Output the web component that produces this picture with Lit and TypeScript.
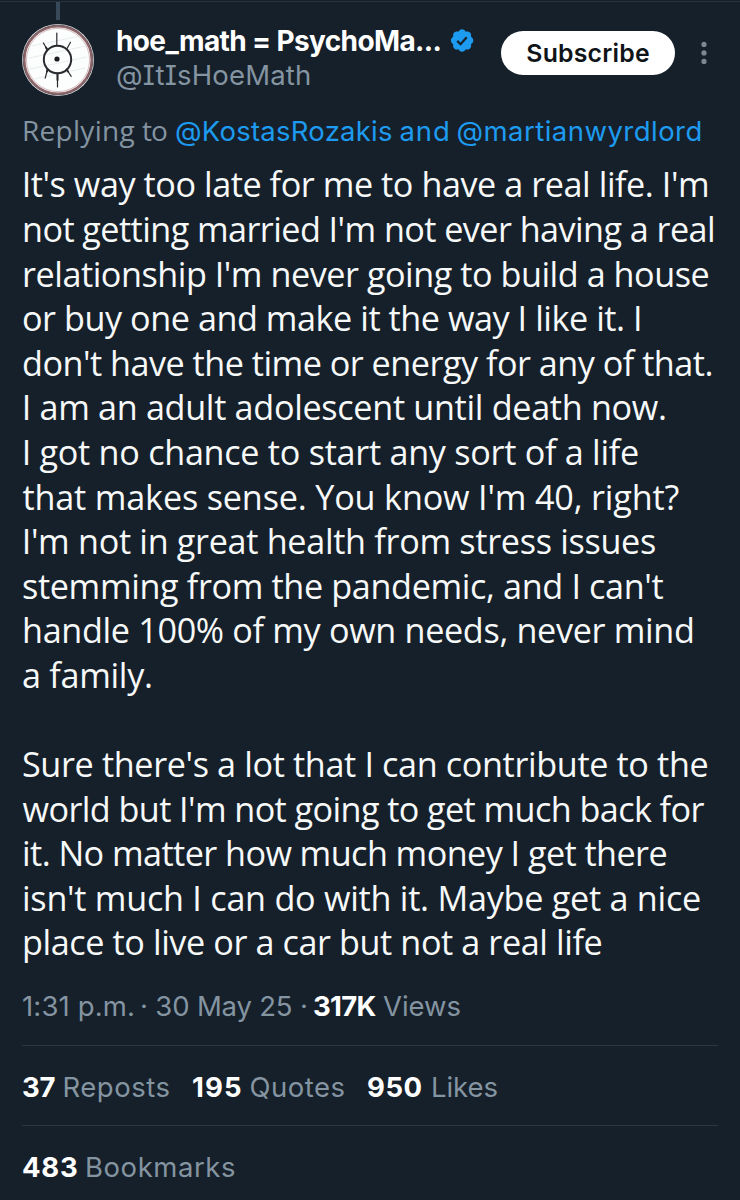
import { LitElement, html, css, svg } from "lit";
import { customElement, property } from "lit/decorators.js";

const pen = document.createElement("canvas").getContext("2d")!;

/** A run of text tracked so that its glyphs span exactly `span` pixels. */
@customElement("fit-text")
class FitText extends LitElement {
  @property() text = "";
  @property({ type: Number }) span = 0;
  @property({ type: Number }) lead = 0;

  static styles = css`
    :host { display: block; white-space: pre; flex: none; }
    .run { display: block; width: max-content; }
  `;

  render() {
    return html`<span class="run">${this.text}</span>`;
  }

  updated() {
    const run = this.renderRoot.querySelector(".run") as HTMLElement;
    run.style.letterSpacing = "0";
    run.style.textIndent = "0";
    const cs = getComputedStyle(run);
    pen.font = `${cs.fontWeight} ${cs.fontSize} ${cs.fontFamily}`;
    const m = pen.measureText(this.text);
    const bearings = m.width - m.actualBoundingBoxLeft - m.actualBoundingBoxRight;
    const ink = run.getBoundingClientRect().width - bearings;
    run.style.letterSpacing = `${(this.span - ink) / (this.text.length - 1)}px`;
    run.style.textIndent = `${m.actualBoundingBoxLeft}px`;
    this.style.width = `${this.span}px`;
    this.style.marginLeft = `${this.lead}px`;
  }
}

type Run = [text: string, from: number, to: number, kind?: string];

const EDGE = 23;

const runs = (list: Run[], edge = EDGE) => {
  let x = edge;
  return list.map(([text, from, to, kind]) => {
    const lead = from - x;
    x = to;
    return html`<fit-text class=${kind ?? "plain"} .text=${text} .span=${to - from} .lead=${lead}></fit-text>`;
  });
};

const BODY: (Run | null)[] = [
  ["It's way too late for me to have a real life. I'm", 24.7, 707],
  ["not getting married I'm not ever having a real", 24, 713],
  ["relationship I'm never going to build a house", 24, 708.5],
  ["or buy one and make it the way I like it. I", 23, 640],
  ["don't have the time or energy for any of that.", 23, 711.5],
  ["I am an adult adolescent until death now.", 24.7, 665],
  ["I got no chance to start any sort of a life", 24.7, 638],
  ["that makes sense. You know I'm 40, right?", 22.5, 678.5],
  ["I'm not in great health from stress issues", 24.7, 655],
  ["stemming from the pandemic, and I can't", 23, 663.5],
  ["handle 100% of my own needs, never mind", 24, 692],
  ["a family.", 23, 151],
  null,
  ["Sure there's a lot that I can contribute to the", 23, 707.5],
  ["world but I'm not going to get much back for", 22.5, 704.5],
  ["it. No matter how much money I get there", 24, 666.5],
  ["isn't much I can do with it. Maybe get a nice", 24, 700],
  ["place to live or a car but not a real life", 24, 601.5],
];

const avatar = svg`
  <circle cx="36" cy="36" r="36" fill="#e9e4e4"/>
  <circle cx="36" cy="36" r="33.6" fill="#fff" stroke="#8f6468" stroke-width="2.2"/>
  <circle cx="36" cy="36" r="34.9" fill="none" stroke="#51454c" stroke-width=".8"/>
  <circle cx="36" cy="36" r="31.6" fill="#fcfdfd" stroke="#c7adb0" stroke-width=".8"/>
  <g stroke="#dde6e8" stroke-width=".7" fill="none">
    <path d="M10 22 58 12M7 34 64 22M8 45 65 33M12 55 63 44"/>
  </g>
  <g stroke="#282a2e" fill="none" stroke-linecap="round">
    <circle cx="35.5" cy="35.5" r="13.7" stroke-width="2"/>
    <path stroke-width="1.2" d="M34.8 21.5V9M25.2 25.5 21.4 19M44.6 25.2 48.5 18.3M25.5 45.5 23.2 54.2M44.7 45.5 49.2 52.3M35.5 50V63"/>
    <path stroke-width="2" d="M35.5 49.5V56M44.7 45.5 46 47.5M25.5 45.5 25 47.5M25.2 25.5 24 23.5"/>
  </g>
  <circle cx="35" cy="35" r="2.6" fill="#1c1d20"/>`;

const badge = svg`
  <path fill="#1d9bf0" d="M20.396 11c-.018-.646-.215-1.275-.57-1.816-.354-.54-.852-.972-1.438-1.246.223-.607.27-1.264.14-1.897-.131-.634-.437-1.218-.882-1.687-.47-.445-1.053-.75-1.687-.882-.633-.13-1.29-.083-1.897.14-.273-.587-.704-1.086-1.245-1.44S11.647 1.62 11 1.604c-.646.017-1.273.213-1.813.568s-.969.854-1.24 1.44c-.608-.223-1.267-.272-1.902-.14-.635.13-1.22.436-1.69.882-.445.47-.749 1.055-.878 1.688-.13.633-.08 1.29.144 1.896-.587.274-1.087.705-1.443 1.245-.356.54-.555 1.17-.574 1.817.02.647.218 1.276.574 1.817.356.54.856.972 1.443 1.245-.224.606-.274 1.263-.144 1.896.13.634.433 1.218.877 1.688.47.443 1.054.747 1.687.878.633.132 1.29.084 1.897-.136.274.586.705 1.084 1.246 1.439.54.354 1.17.551 1.816.569.647-.016 1.276-.213 1.817-.567s.972-.854 1.245-1.44c.604.239 1.266.296 1.903.164.636-.132 1.22-.447 1.68-.907.46-.46.776-1.044.908-1.681s.075-1.299-.165-1.903c.586-.274 1.084-.705 1.439-1.246.354-.54.551-1.17.569-1.816z"/>
  <path fill="none" stroke="#17202a" stroke-width="1.9" d="M6.9 11.3 9.7 14.1 14.9 8.3"/>`;

@customElement("app-root")
class AppRoot extends LitElement {
  static styles = css`
    :host {
      display: block;
      height: 1200px;
      overflow: hidden;
      box-sizing: border-box;
      background: #16202a;
      border-top: 1px solid #16202a;
      font-family: Inter, "Liberation Sans", sans-serif;
      font-size: 27.5px;
      color: #8494a1;
    }
    .top { height: 1px; background: #27323c; }
    .head { display: flex; height: 112px; padding-left: 22px; }
    .side { width: 72px; display: flex; flex-direction: column; align-items: center; }
    .thread { width: 4px; height: 18px; background: #38495a; }
    .avatar { width: 72px; height: 72px; margin-top: 4px; flex: none; }
    .who { width: 358px; margin-left: 23px; padding-top: 21.5px; }
    .row { display: flex; }
    .who .row { height: 34px; line-height: 34px; align-items: center; }
    .name { color: #fff; font-weight: 700; font-size: 28px; }
    .handle { font-feature-settings: "ss02", "cv08"; }
    .badge { width: 27px; height: 27px; margin-left: 8.3px; margin-top: 0; }
    .subscribe {
      margin: 29px 0 0 26px;
      width: 174px; height: 44px; flex: none;
      border-radius: 22px;
      background: #fff; color: #0f1419;
      line-height: 44px; font-size: 24.8px; font-weight: 600;
    }
    .dots { width: 6px; height: 24px; margin: 39px 0 0 26px; flex: none; }
    .reply { height: 48.4px; padding-left: 23px; line-height: 34px; box-sizing: border-box; }
    .open { font-family: "Open Sans", Inter, sans-serif; font-size: 28px; line-height: 32px; }
    .link { color: #1d9bf0; }
    .body {
      color: #f7f9f9; font-family: "Open Sans", Inter, sans-serif;
      font-size: 34.2px; line-height: 44.6px; padding-left: 23px;
    }
    .body .row { height: 44.6px; }
    .meta { padding-left: 23px; line-height: 34px; height: 56px; padding-top: 24px; }
    .strong { color: #fff; font-weight: 700; }
    .rule { height: 1px; margin: 0 22px; background: #2c3741; }
    .stats { height: 79px; line-height: 83px; padding-left: 23px; }
  `;

  render() {
    return html`
      <div class="top"></div>
      <header class="head">
        <div class="side">
          <div class="thread"></div>
          <svg class="avatar" viewBox="0 0 72 72">${avatar}</svg>
        </div>
        <div class="who">
          <div class="row">
            ${runs([["hoe_math = PsychoMa...", 117, 440.5, "name"]], 117)}
            <svg class="badge" viewBox="0 0 22 22">${badge}</svg>
          </div>
          <div class="row">${runs([["@ItIsHoeMath", 117, 310, "handle"]], 117)}</div>
        </div>
        <div class="subscribe">${runs([["Subscribe", 527.3, 649, "plain"]], 501)}</div>
        <svg class="dots" viewBox="0 0 6 24" fill="#7b8894">
          <circle cx="3" cy="3.4" r="2.6"/><circle cx="3" cy="11.9" r="2.6"/><circle cx="3" cy="20.4" r="2.6"/>
        </svg>
      </header>
      <div class="row reply">
        ${runs([
          ["Replying", 24, 134.5, "open"],
          ["to", 142, 167, "open"],
          ["@KostasRozakis", 176, 392, "link"],
          ["and", 400.5, 448, "link"],
          ["@martianwyrdlord", 457.5, 700.5, "link"],
        ])}
      </div>
      <div class="body">
        ${BODY.map((line) => html`<div class="row">${line ? runs([line]) : ""}</div>`)}
      </div>
      <div class="row meta">
        ${runs([
          ["1:31 p.m.", 23, 133],
          ["· 30 May 25 ·", 142, 306],
          ["317K", 314, 376.5, "strong"],
          ["Views", 383, 460.5],
        ])}
      </div>
      <div class="rule"></div>
      <div class="row stats">
        ${runs([
          ["37", 23, 54.5, "strong"], ["Reposts", 64.5, 169.5],
          ["195", 193, 241, "strong"], ["Quotes", 250.5, 344.5],
          ["950", 368, 421.5, "strong"], ["Likes", 433, 497.5],
        ])}
      </div>
      <div class="rule"></div>
      <div class="row stats">
        ${runs([["483", 23, 77, "strong"], ["Bookmarks", 87, 235]])}
      </div>
    `;
  }
}
